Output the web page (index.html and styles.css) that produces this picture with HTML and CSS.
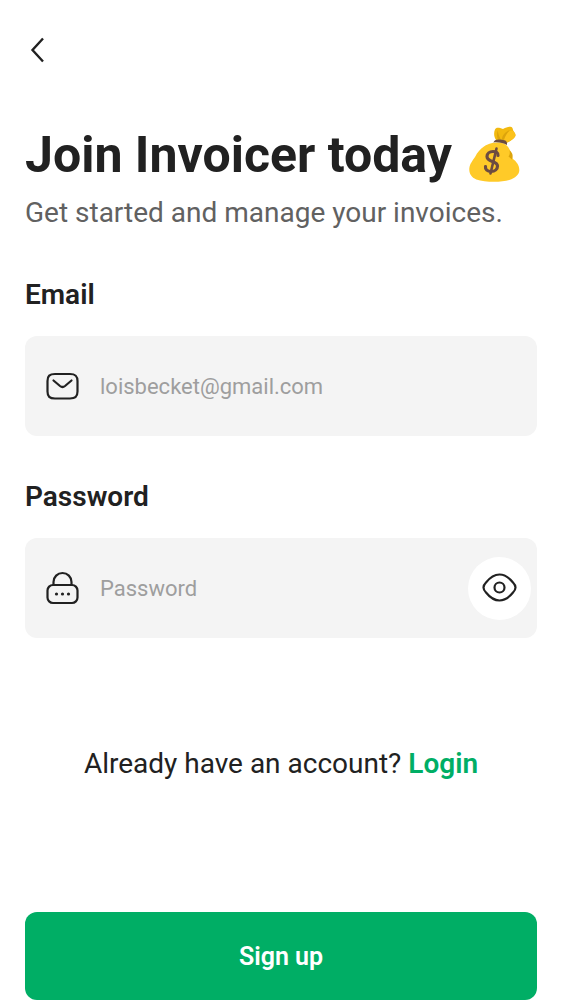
FILE: index.html
```html
<!DOCTYPE html>
<html lang="en">
<head>
<meta charset="utf-8">
<meta name="viewport" content="width=device-width, initial-scale=1">
<title>Join Invoicer</title>
<link rel="stylesheet" href="styles.css">
</head>
<body>
<main class="page">
  <header class="topbar">
    <button class="back" type="button" aria-label="Back">
      <svg width="26" height="28" viewBox="0 0 26 28" fill="none" stroke="#212121" stroke-width="2.4"><path d="M18 2.5 7.500 14 18 25.500"/></svg>
    </button>
  </header>
  <h1 class="title">
    <span>Join Invoicer today</span>
    <svg class="moneybag" width="52" height="58" viewBox="9 6 52 58" role="img" aria-label="Money bag">
      <path fill="#f2b90f" d="M36 20c-2-3-2.500-7-1-10.500 1-2.500 4-2 8-.5 3-1.500 5-2.500 7.500-2.200 2.500.3 2 2.200 3 4.200 1 1.500 2.500 3 2 5-1.500 3-5 5-8.500 6.800L43 20z"/>
      <path fill="#fcc21b" d="M43 20c1-4 3-7 7-9 3-1 4 0 5 3 1 2-1 4-3 5.500-2 1.500-4 2.500-5.500 3z"/>
      <path fill="#dca40c" d="M38 19.500c-1.500-3-1-6-.5-9 1 3 1 5 3 8.500zM42 19.500c0-4 3-7.500 8-9.500-3 3-5 6-6 10z"/>
      <path fill="#ffca28" d="M24 26.500c5-3.500 10-4 14-4 5 0 9 2 11 6 2 3 2.500 6 3.500 10 4 3 7 7 6.800 12-.2 4-4 7.500-10 9.500-8 2.500-24 2.500-33-.5-5-2-7.300-6-7-11 .5-5 3.500-8 6-12 2-4 5-7.500 8.700-10z"/>
      <path fill="#dca40c" d="M49.500 30.500c3 2 4 5 2.500 9l-3.500-3c1.500-2 1.500-4 1-6z"/>
      <path fill="#6d4c41" d="M33.500 22.500c.5-2.500 3-3.500 7-3 4 .3 6.500 1.500 6.500 3.500v2c-4-2-8-3-13.500-2.500z"/>
      <path fill="none" stroke="#6d4c41" stroke-width="3.200" stroke-linecap="round" stroke-linejoin="round" d="M38 35.500c.5-2.500-2-4-5-4-3.500 0-6 2-6 5 0 6 10.500 4 10.500 9.500 0 3-2.500 5.500-6.500 5.500-3.500 0-6-2-5.500-5"/>
      <path fill="none" stroke="#6d4c41" stroke-width="2.600" stroke-linecap="round" d="m36.500 28.500-6 25"/>
    </svg>
  </h1>
  <p class="subtitle">Get started and manage your invoices.</p>

  <form class="form">
    <div class="group">
      <label class="label" for="email">Email</label>
      <div class="field">
        <svg class="icon" width="34" height="34" viewBox="0 0 34 34" fill="none" stroke="#212121" stroke-width="2.200" stroke-linecap="round" stroke-linejoin="round"><path d="M9 5h15c5.500 0 7.500 2 7.500 7v10.500c0 5-2 7-7.500 7H9c-5.500 0-7.500-2-7.500-7V12c0-5 2-7 7.500-7z"/><path d="m7.500 11.500 6.500 5.500q2.500 2 5 0l6.500-5.500"/></svg>
        <input class="input" id="email" type="email" placeholder="loisbecket@gmail.com">
      </div>
    </div>
    <div class="group">
      <label class="label" for="password">Password</label>
      <div class="field">
        <svg class="icon" width="34" height="34" viewBox="0 0 34 34" fill="none" stroke="#212121" stroke-width="2.200" stroke-linecap="round"><path d="M7.500 14v-3a9 9 0 0 1 18 0v3"/><rect x="1.500" y="14" width="30" height="18" rx="5.500"/><g fill="#212121" stroke="none"><circle cx="10.500" cy="23" r="1.600"/><circle cx="16.500" cy="23" r="1.600"/><circle cx="22.500" cy="23" r="1.600"/></g></svg>
        <input class="input" id="password" type="password" placeholder="Password">
        <button class="reveal" type="button" aria-label="Show password">
          <svg width="36" height="30" viewBox="0 0 36 30" fill="none" stroke="#212121" stroke-width="2.200"><path d="M1.500 14.500c0-2 1-3.500 2.500-5C8 4.500 12 1.500 17.500 1.500S27 4.500 31 9.500c1.500 1.500 2.500 3 2.500 5s-1 3.500-2.500 5c-4 5-8 8-13.500 8S8 24.500 4 19.500c-1.500-1.500-2.500-3-2.500-5z"/><circle cx="17.500" cy="14.500" r="5"/></svg>
        </button>
      </div>
    </div>
    <p class="prompt">Already have an account? <a class="login" href="#login">Login</a></p>
    <button class="submit" type="submit">Sign up</button>
  </form>
</main>
</body>
</html>
```
FILE: styles.css
```css
* {
  box-sizing: border-box;
}

body {
  margin: 0;
  background: #fff;
  color: #212121;
  font-family: Roboto, "Liberation Sans", sans-serif;
}

button,
input {
  font-family: inherit;
}

.page {
  padding: 0 25px;
}

.topbar {
  display: flex;
  align-items: center;
  height: 100px;
}

.back {
  display: flex;
  padding: 0;
  border: 0;
  background: none;
}

.title {
  display: flex;
  align-items: center;
  gap: 17px;
  margin: 25px 0 10px;
  font-size: 50px;
  font-weight: 700;
  line-height: 60px;
}

.moneybag {
  flex: none;
}

.subtitle {
  margin: 0 0 48px;
  color: #616161;
  font-size: 28px;
  line-height: 36px;
}

.form {
  display: flex;
  flex-direction: column;
}

.group {
  display: flex;
  flex-direction: column;
  gap: 25px;
  margin-bottom: 45px;
}

.label {
  font-size: 28px;
  font-weight: 600;
  line-height: 32px;
}

.field {
  display: flex;
  align-items: center;
  gap: 20px;
  height: 100px;
  padding: 0 6px 0 21px;
  border-radius: 12px;
  background: #f4f4f4;
}

.icon {
  flex: none;
}

.input {
  flex: 1;
  min-width: 0;
  padding: 2px 0 0;
  border: 0;
  outline: 0;
  background: none;
  color: #212121;
  font-size: 22px;
  line-height: 32px;
}

.input::placeholder {
  color: #9e9e9e;
  opacity: 1;
}

.reveal {
  display: flex;
  flex: none;
  align-items: center;
  justify-content: center;
  width: 63px;
  height: 63px;
  padding: 0;
  border: 0;
  border-radius: 50%;
  background: #fff;
}

.prompt {
  margin: 63px 0 130px;
  font-size: 28px;
  line-height: 36px;
  text-align: center;
}

.login {
  color: #00ae65;
  font-weight: 600;
  text-decoration: none;
}

.submit {
  height: 88px;
  padding: 0;
  border: 0;
  border-radius: 12px;
  background: #00ae65;
  color: #fff;
  font-size: 25px;
  font-weight: 600;
}
```
